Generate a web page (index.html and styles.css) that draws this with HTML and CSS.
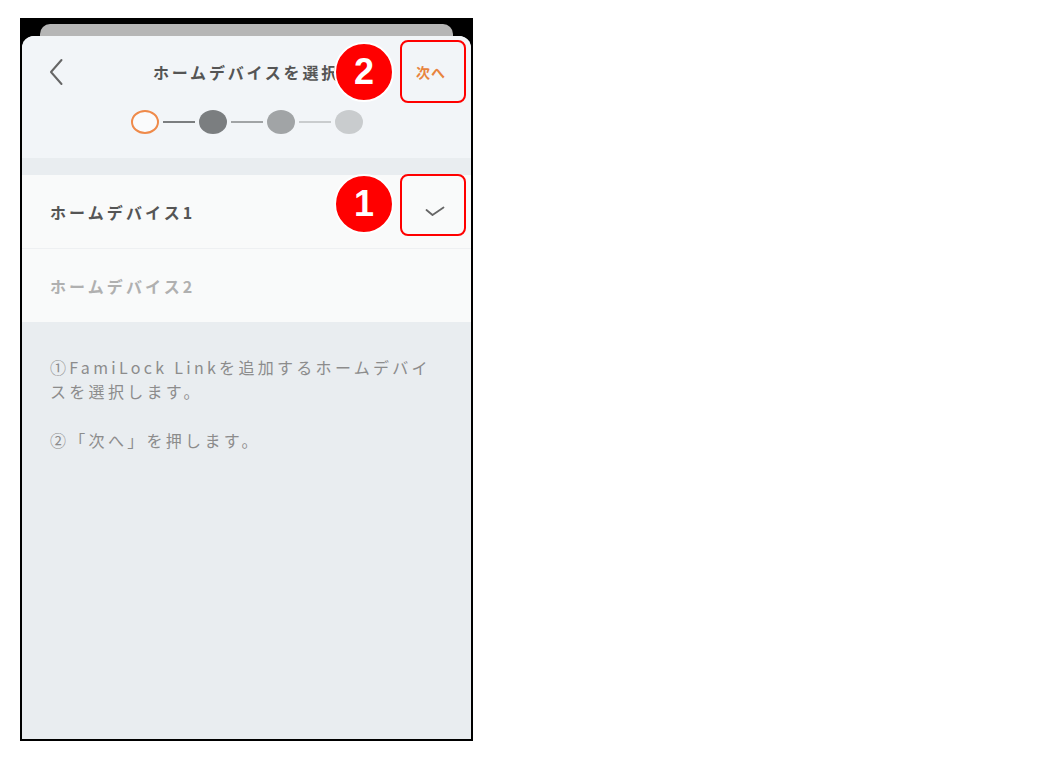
FILE: index.html
```html
<!DOCTYPE html>
<html lang="ja">
<head>
    <meta charset="UTF-8">
    <meta name="viewport" content="width=device-width, initial-scale=1.0">
    <title>ホームデバイスを選択</title>
    <link rel="stylesheet" href="styles.css">
</head>
<body>
    <div class="frame">
        <div class="back-sheet"></div>
        <div class="sheet">
            <div class="header">
                <div class="nav">
                    <span class="back">
                        <svg width="14" height="28" viewBox="0 0 14 28"><path d="M12.5 2 L2 14 L12.5 26" fill="none" stroke="#666" stroke-width="2" stroke-linecap="round" stroke-linejoin="round"/></svg>
                    </span>
                    <h1 class="title">ホームデバイスを選択</h1>
                    <span class="next">次へ</span>
                </div>
                <div class="steps">
                    <span class="step current"></span>
                    <span class="bar bar-1"></span>
                    <span class="step step-2"></span>
                    <span class="bar bar-2"></span>
                    <span class="step step-3"></span>
                    <span class="bar bar-3"></span>
                    <span class="step step-4"></span>
                </div>
            </div>

            <ul class="device-list">
                <li class="device selected">
                    <span>ホームデバイス1</span>
                    <svg width="20" height="11" viewBox="0 0 20 11"><path d="M1.5 4 L7.5 9 L18.5 1.5" fill="none" stroke="#666" stroke-width="1.8" stroke-linecap="round" stroke-linejoin="round"/></svg>
                </li>
                <li class="device">
                    <span>ホームデバイス2</span>
                </li>
            </ul>

            <div class="notes">
                <p>①FamiLock Linkを追加するホームデバイ<br>スを選択します。</p>
                <p>②「次へ」を押します。</p>
            </div>
        </div>

        <!-- 注釈 -->
        <div class="mark mark-next"></div>
        <div class="badge badge-next">2</div>
        <div class="mark mark-check"></div>
        <div class="badge badge-check">1</div>
    </div>
</body>
</html>
```

FILE: styles.css
```css
body {
    margin: 0;
    background: #fff;
    font-family: "Noto Sans CJK JP", "Noto Sans", sans-serif;
}
.frame {
    position: relative;
    width: 453px;
    height: 723px;
    margin: 18px 0 0 20px;
    border: 2px solid #000;
    box-sizing: border-box;
    background: #000;
    display: flex;
    flex-direction: column;
    overflow: hidden;
}
.back-sheet {
    height: 12px;
    margin: 4px 18px 0;
    background: #b6b6b6;
    border-radius: 10px 10px 0 0;
    flex-shrink: 0;
}
.sheet {
    flex: 1;
    background: #e9edf0;
    border-radius: 12px 12px 0 0;
    overflow: hidden;
    display: flex;
    flex-direction: column;
}
.header {
    background: #f2f5f8;
    padding: 22px 0 24px;
}
.nav {
    display: grid;
    grid-template-columns: 1fr auto 1fr;
    align-items: center;
    height: 28px;
}
.back {
    padding-left: 27px;
    display: flex;
}
.title {
    margin: 0;
    font-size: 16px;
    font-weight: 700;
    color: #555;
    letter-spacing: 2.8px;
}
.next {
    justify-self: end;
    padding-right: 25px;
    font-size: 14px;
    font-weight: 700;
    color: #e8843e;
    letter-spacing: 1px;
}
.steps {
    display: flex;
    align-items: center;
    justify-content: center;
    margin-top: 24px;
    height: 24px;
}
.step {
    width: 28px;
    height: 24px;
    border-radius: 50%;
    box-sizing: border-box;
}
.step.current {
    border: 2px solid #ef8a4a;
    background: #fafbfc;
}
.step-2 { background: #7b7e80; }
.step-3 { background: #a1a4a6; }
.step-4 { background: #c9ccce; }
.bar {
    width: 32px;
    height: 2px;
    margin: 0 4px;
}
.bar-1 { background: #7b7e80; }
.bar-2 { background: #a1a4a6; }
.bar-3 { background: #c9ccce; }
.device-list {
    list-style: none;
    margin: 17px 0 0;
    padding: 0;
    background: #f9fafa;
}
.device {
    height: 73px;
    display: flex;
    align-items: center;
    justify-content: space-between;
    padding: 0 26px 0 28px;
    font-size: 16px;
    font-weight: 700;
    letter-spacing: 3.1px;
    color: #b0b0b0;
}
.device + .device {
    border-top: 1px solid #eef0f2;
}
.device.selected {
    color: #555;
}
.notes {
    padding: 33px 28px 0;
    font-size: 16px;
    line-height: 24px;
    letter-spacing: 3.3px;
    color: #8c8c8c;
}
.notes p {
    margin: 0 0 25px;
}
.mark {
    position: absolute;
    left: 378px;
    width: 66px;
    border: 2px solid #f00;
    border-radius: 8px;
    box-sizing: border-box;
}
.mark-next {
    top: 20px;
    height: 63px;
}
.mark-check {
    top: 154px;
    height: 62px;
}
.badge {
    position: absolute;
    left: 312px;
    width: 60px;
    height: 60px;
    border-radius: 50%;
    border: 2px solid #fff;
    box-sizing: border-box;
    background: #f00;
    color: #fff;
    font-family: "Liberation Sans", Arial, sans-serif;
    font-weight: 700;
    font-size: 36px;
    display: flex;
    align-items: center;
    justify-content: center;
}
.badge-next { top: 22px; }
.badge-check { top: 154px; }
```
